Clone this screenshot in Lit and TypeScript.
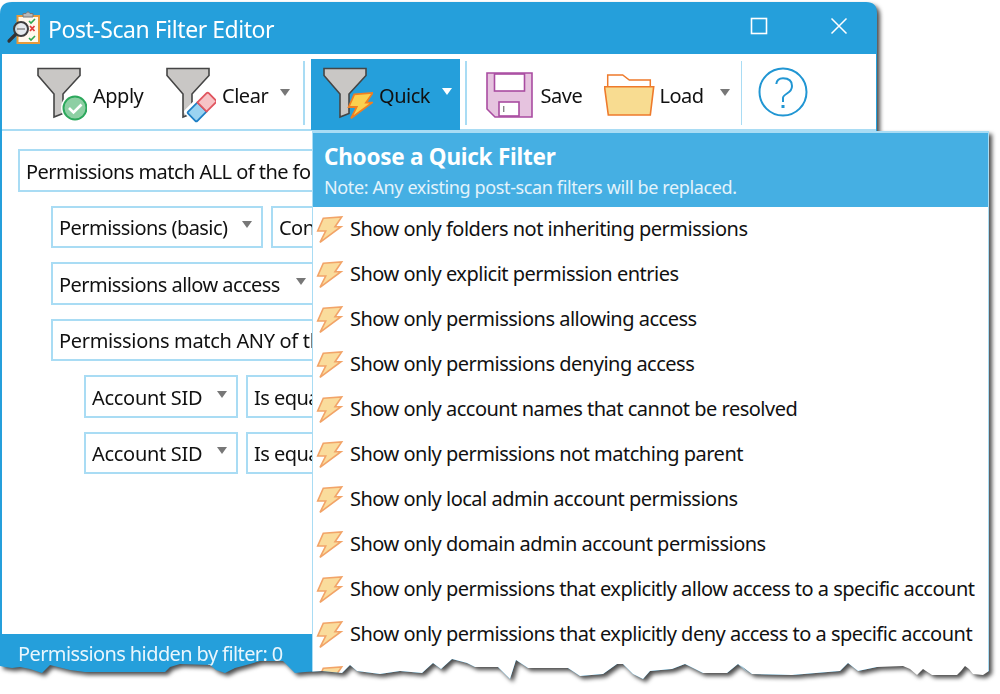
import { LitElement, html, css, svg } from "lit";
import { customElement } from "lit/decorators.js";

const bolt = (fill: string, stroke: string, w = 1.6) => svg`<path d="M7.3 2.3 25.7 .9 19 10.7H25L4 26.3 9.7 15H1.7Z" fill="${fill}" stroke="${stroke}" stroke-width="${w}" stroke-linejoin="miter"/>`;

const funnel = svg`<path d="M1 1.5H43V8.5L26 27V46.5L17 50V27L1 8.5Z" fill="#c9c7c5" stroke="#454545" stroke-width="1.6" stroke-linejoin="miter"/>`;

const arrow = (cls = "") => html`<span class="arrow ${cls}"></span>`;

const items = [
  "Show only folders not inheriting permissions",
  "Show only explicit permission entries",
  "Show only permissions allowing access",
  "Show only permissions denying access",
  "Show only account names that cannot be resolved",
  "Show only permissions not matching parent",
  "Show only local admin account permissions",
  "Show only domain admin account permissions",
  "Show only permissions that explicitly allow access to a specific account",
  "Show only permissions that explicitly deny access to a specific account",
];

@customElement("app-root")
export class AppRoot extends LitElement {
  static styles = css`
    :host { display: block; width: 1000px; height: 694px; background: #fff; overflow: hidden;
      font-family: "Noto Sans", "Open Sans", sans-serif; font-size: 20px; letter-spacing: -0.48px; color: #111; }
    .shadow { height: 694px; filter: drop-shadow(3px 3px 2px rgba(0,0,0,.7)); }
    .stage { position: relative; height: 694px;
      clip-path: path("M0 13Q0 1 12 1H866Q877 1 877 12V130H989V670L983 674 973 673 969 668 965 665 961 670 957 674 932 674 923 668 917 674 910 668 903 665 877 666 858 670 848 662 840 670 792 674 752 673 740 664 748 672 738 663 727 672 703 672 685 663 672 668 650 670 643 678 633 673 623 663 617 663 603 673 580 675 568 667 528 667 516 659 510 678 498 666 475 666 467 662 452 658 441 668 433 662 422 672 400 670 380 673 357 670 350 664 342 672 322 670 305 671 295 672 283 660 260 660 250 663 235 667 225 672 216 669 210 664 180 663 170 666 165 671 120 671 85 671 70 669 58 666 50 664 42 672 30 668 20 666 12 667 5 666 0 665Z"); }
    .window { box-sizing: border-box; height: 693px; width: 877px; margin-top: 1px; background: #259fdb;
      padding: 0 1px 0 2px; display: flex; flex-direction: column; }
    .title { height: 53px; flex: none; display: flex; align-items: center; color: #fff; font-size: 23px; letter-spacing: -0.45px; }
    .appicon { margin: 5px 0 0 4px; width: 38px; height: 38px; flex: none; }
    .title-text { margin: 3px 0 0 4px; flex: 1; }
    .winbtn { width: 18px; height: 18px; flex: none; margin-top: -3px; }
    .winbtn.max { margin-right: 62px; }
    .winbtn.close { margin-right: 28px; }
    .toolbar { height: 77px; flex: none; box-sizing: border-box; background: #fff; display: flex;
      border-bottom: 2px solid #a9dcf4; padding-left: 35px; }
    .btn { display: flex; align-items: center; height: 71px; margin-top: 5px; box-sizing: border-box; flex: none; }
    .btn svg { flex: none; }
    .b-apply { width: 129px; }
    .b-clear { width: 137px; }
    .b-quick { width: 149px; margin-left: 6.5px; background: #259fdb; padding-left: 12px; }
    .b-save { width: 118px; margin-left: 19px; }
    .b-load { width: 137px; }
    .b-help { margin-left: 16px; }
    .lbl { margin: 2px 0 0 6px; }
    .lbl.save { margin-left: 7px; }
    .lbl.load { margin-left: 5px; }
    .arrow { width: 0; height: 0; border-left: 5.5px solid transparent; border-right: 5.5px solid transparent;
      border-top: 7px solid #777; flex: none; }
    .arrow.w { border-top-color: #fff; }
    .b-clear .arrow { margin-left: 12px; margin-top: -4px; }
    .b-quick .arrow { margin-left: 12px; margin-top: -6px; }
    .b-load .arrow { margin-left: 16px; margin-top: -4px; }
    .sep { width: 1.5px; height: 64px; margin-top: 7px; background: #a9dcf4; flex: none; }
    .sep.s2 { margin-left: 5px; }
    .helpicon { margin-top: -5px; }
    .body { background: #fff; display: flex; flex-direction: column; gap: 14px; padding: 18px 0 0 16px; height: 503px; flex: none; box-sizing: border-box; }
    .row { display: flex; gap: 8px; height: 42.5px; flex: none; }
    .i1 { margin-left: 33px; }
    .i2 { margin-left: 66px; }
    .box { box-sizing: border-box; border: 2px solid #a9dcf4; background: #fff; display: flex; align-items: center;
      justify-content: space-between; padding: 2px 7px 0 6px; flex: none; white-space: nowrap; overflow: hidden; letter-spacing: -0.55px; }
    .box .arrow { margin-top: -6px; margin-right: 2px; }
    .w800 { width: 800px; }
    .w212 { width: 212px; }
    .w154 { width: 154px; letter-spacing: -0.3px; }
    .w270 { width: 266px; }
    .w300 { width: 300px; }
    .w700 { width: 700px; letter-spacing: -0.33px; }
    .status { flex: 1; color: #e9f6fd; padding: 6px 0 0 16px; letter-spacing: -0.6px; }
    .status-text { line-height: 27px; }
    .menu { position: absolute; left: 312px; top: 130px; width: 677px; height: 564px; box-sizing: border-box;
      background: #fff; border: solid #a9dcf4; border-width: 0 1.5px; }
    .menu-head { height: 76px; box-sizing: border-box; background: #45afe3; color: #fff; padding: 9px 0 0 11px; border-top: 2px solid #a9dcf4; }
    .menu-title { font-size: 22.5px; font-weight: 700; line-height: 30px; letter-spacing: -0.25px; }
    .menu-note { font-size: 18px; line-height: 24px; margin-top: 3px; color: #e3f3fb; letter-spacing: -0.38px; }
    .item { height: 45px; display: flex; align-items: center; padding-left: 3px; white-space: nowrap; letter-spacing: -0.5px; }
    .item svg { flex: none; width: 28px; height: 28px; margin-right: 6px; }
    .item span { margin-top: -2px; }
  `;

  render() {
    return html`
      <div class="shadow"><div class="stage">
        <div class="window">
          <div class="title">
            <svg class="appicon" viewBox="0 0 38 38">
              <rect x="11.500" y="5" width="21.500" height="27" fill="#fff8ec" stroke="#e89a3a" stroke-width="2"/>
              <path d="M17 6V2.500H20Q22-1 24 2.500H27V6Z" fill="#b8b8b8" stroke="#777"/>
              <path d="M23 10l2 2 4-4M23 27l2 2 4-4" fill="none" stroke="#2fa84f" stroke-width="1.6"/>
              <path d="M24 15l4.500 5M28.500 15l-4.500 5" stroke="#e23b3b" stroke-width="1.8"/>
              <circle cx="15" cy="18" r="7" fill="#dfe8ee" fill-opacity=".85" stroke="#3d3d3d" stroke-width="2"/>
              <path d="M11 18H19" stroke="#888" stroke-width="1.5"/>
              <path d="M9.500 23.500 3 30" stroke="#333" stroke-width="3.2" stroke-linecap="round"/>
            </svg>
            <span class="title-text">Post-Scan Filter Editor</span>
            <svg class="winbtn max" viewBox="0 0 18 18"><rect x="1.5" y="1.5" width="15" height="15" fill="none" stroke="#fff" stroke-width="1.6"/></svg>
            <svg class="winbtn close" viewBox="0 0 18 18"><path d="M1.5 1.5 16.5 16.5M16.5 1.5 1.5 16.5" fill="none" stroke="#fff" stroke-width="1.5"/></svg>
          </div>
          <div class="toolbar">
            <div class="btn b-apply">
              <svg width="50" height="56" viewBox="0 0 50 56">${funnel}
                <circle cx="38" cy="41" r="14" fill="#fff"/>
                <circle cx="38" cy="41" r="11.5" fill="#8dcfa3" stroke="#2da85c" stroke-width="2"/>
                <path d="M32 41l4.5 4.5 8-8" fill="none" stroke="#fff" stroke-width="2.6"/>
              </svg>
              <span class="lbl">Apply</span>
            </div>
            <div class="btn b-clear">
              <svg width="50" height="56" viewBox="0 0 50 56">${funnel}
                <g transform="rotate(-45 36 40)">
                  <rect x="19" y="30" width="34" height="20" rx="3" fill="#fff"/>
                  <path d="M23 33.500H36V46.500H23Q21.500 46.500 21.500 45V35Q21.500 33.500 23 33.500Z" fill="#9ad3f1" stroke="#1e7fc4" stroke-width="1.8"/>
                  <path d="M36 33.500H49Q50.500 33.500 50.500 35V45Q50.500 46.500 49 46.500H36Z" fill="#f7c3c6" stroke="#e0555f" stroke-width="1.8"/>
                </g>
              </svg>
              <span class="lbl">Clear</span>${arrow()}
            </div>
            <div class="sep"></div>
            <div class="btn b-quick">
              <svg width="50" height="56" viewBox="0 0 50 56">${funnel}
                <g transform="translate(24 25) scale(1)">${bolt("#fbd04f", "#f07f22", 1.8)}</g>
              </svg>
              <span class="lbl">Quick</span>${arrow("w")}
            </div>
            <div class="sep s2"></div>
            <div class="btn b-save">
              <svg width="48" height="48" viewBox="0 0 48 48">
                <path d="M1 2H46V46H9L1 38Z" fill="#e6c3df" stroke="#a94ca1" stroke-width="1.6"/>
                <rect x="8.500" y="3" width="30" height="17" fill="#fff" stroke="#a94ca1" stroke-width="1.6"/>
                <rect x="13" y="31" width="20" height="14" fill="#fff" stroke="#a94ca1" stroke-width="1.6"/>
                <rect x="17" y="35" width="1.4" height="6" fill="#888"/>
              </svg>
              <span class="lbl save">Save</span>
            </div>
            <div class="btn b-load">
              <svg width="51" height="44" viewBox="0 0 51 44">
                <path d="M3.700 14V2H18.700L25.300 7H46.300V14" fill="#fff" stroke="#ee7a2b" stroke-width="1.5"/>
                <path d="M.5 13.700H49.700L46.300 42H4.300Z" fill="#f8dc91" stroke="#ee7a2b" stroke-width="1.6"/>
              </svg>
              <span class="lbl load">Load</span>${arrow()}
            </div>
            <div class="sep"></div>
            <div class="btn b-help">
              <svg class="helpicon" width="50" height="50" viewBox="-25 -25 50 50">
                <circle r="23.500" fill="none" stroke="#2196d3" stroke-width="2"/>
                <path d="M-6.700-8Q-6-13.700 0-13.700 9-13.700 9-6 9-1.500 4 1.500 0 4 0 6V10" fill="none" stroke="#2196d3" stroke-width="2"/>
                <rect x="-1.500" y="13" width="3" height="3" fill="#2196d3"/>
              </svg>
            </div>
          </div>
          <div class="body">
            <div class="row"><div class="box w800">Permissions match ALL of the following</div></div>
            <div class="row i1">
              <div class="box w212">Permissions (basic)${arrow()}</div>
              <div class="box w300">Contains</div>
            </div>
            <div class="row i1"><div class="box w270">Permissions allow access${arrow()}</div></div>
            <div class="row i1"><div class="box w700">Permissions match ANY of the following</div></div>
            <div class="row i2">
              <div class="box w154">Account SID${arrow()}</div>
              <div class="box w300">Is equal to</div>
            </div>
            <div class="row i2">
              <div class="box w154">Account SID${arrow()}</div>
              <div class="box w300">Is equal to</div>
            </div>
          </div>
          <div class="status"><div class="status-text">Permissions hidden by filter: 0</div></div>
        </div>
        <div class="menu">
          <div class="menu-head">
            <div class="menu-title">Choose a Quick Filter</div>
            <div class="menu-note">Note: Any existing post-scan filters will be replaced.</div>
          </div>
          ${items.map((t) => html`<div class="item"><svg viewBox="0 0 28 28">${bolt("#fadc9c", "#f2a468")}</svg><span>${t}</span></div>`)}
          <div class="item"><svg viewBox="0 0 28 28">${bolt("#fadc9c", "#f2a468")}</svg></div>
        </div>
      </div></div>
    `;
  }
}
